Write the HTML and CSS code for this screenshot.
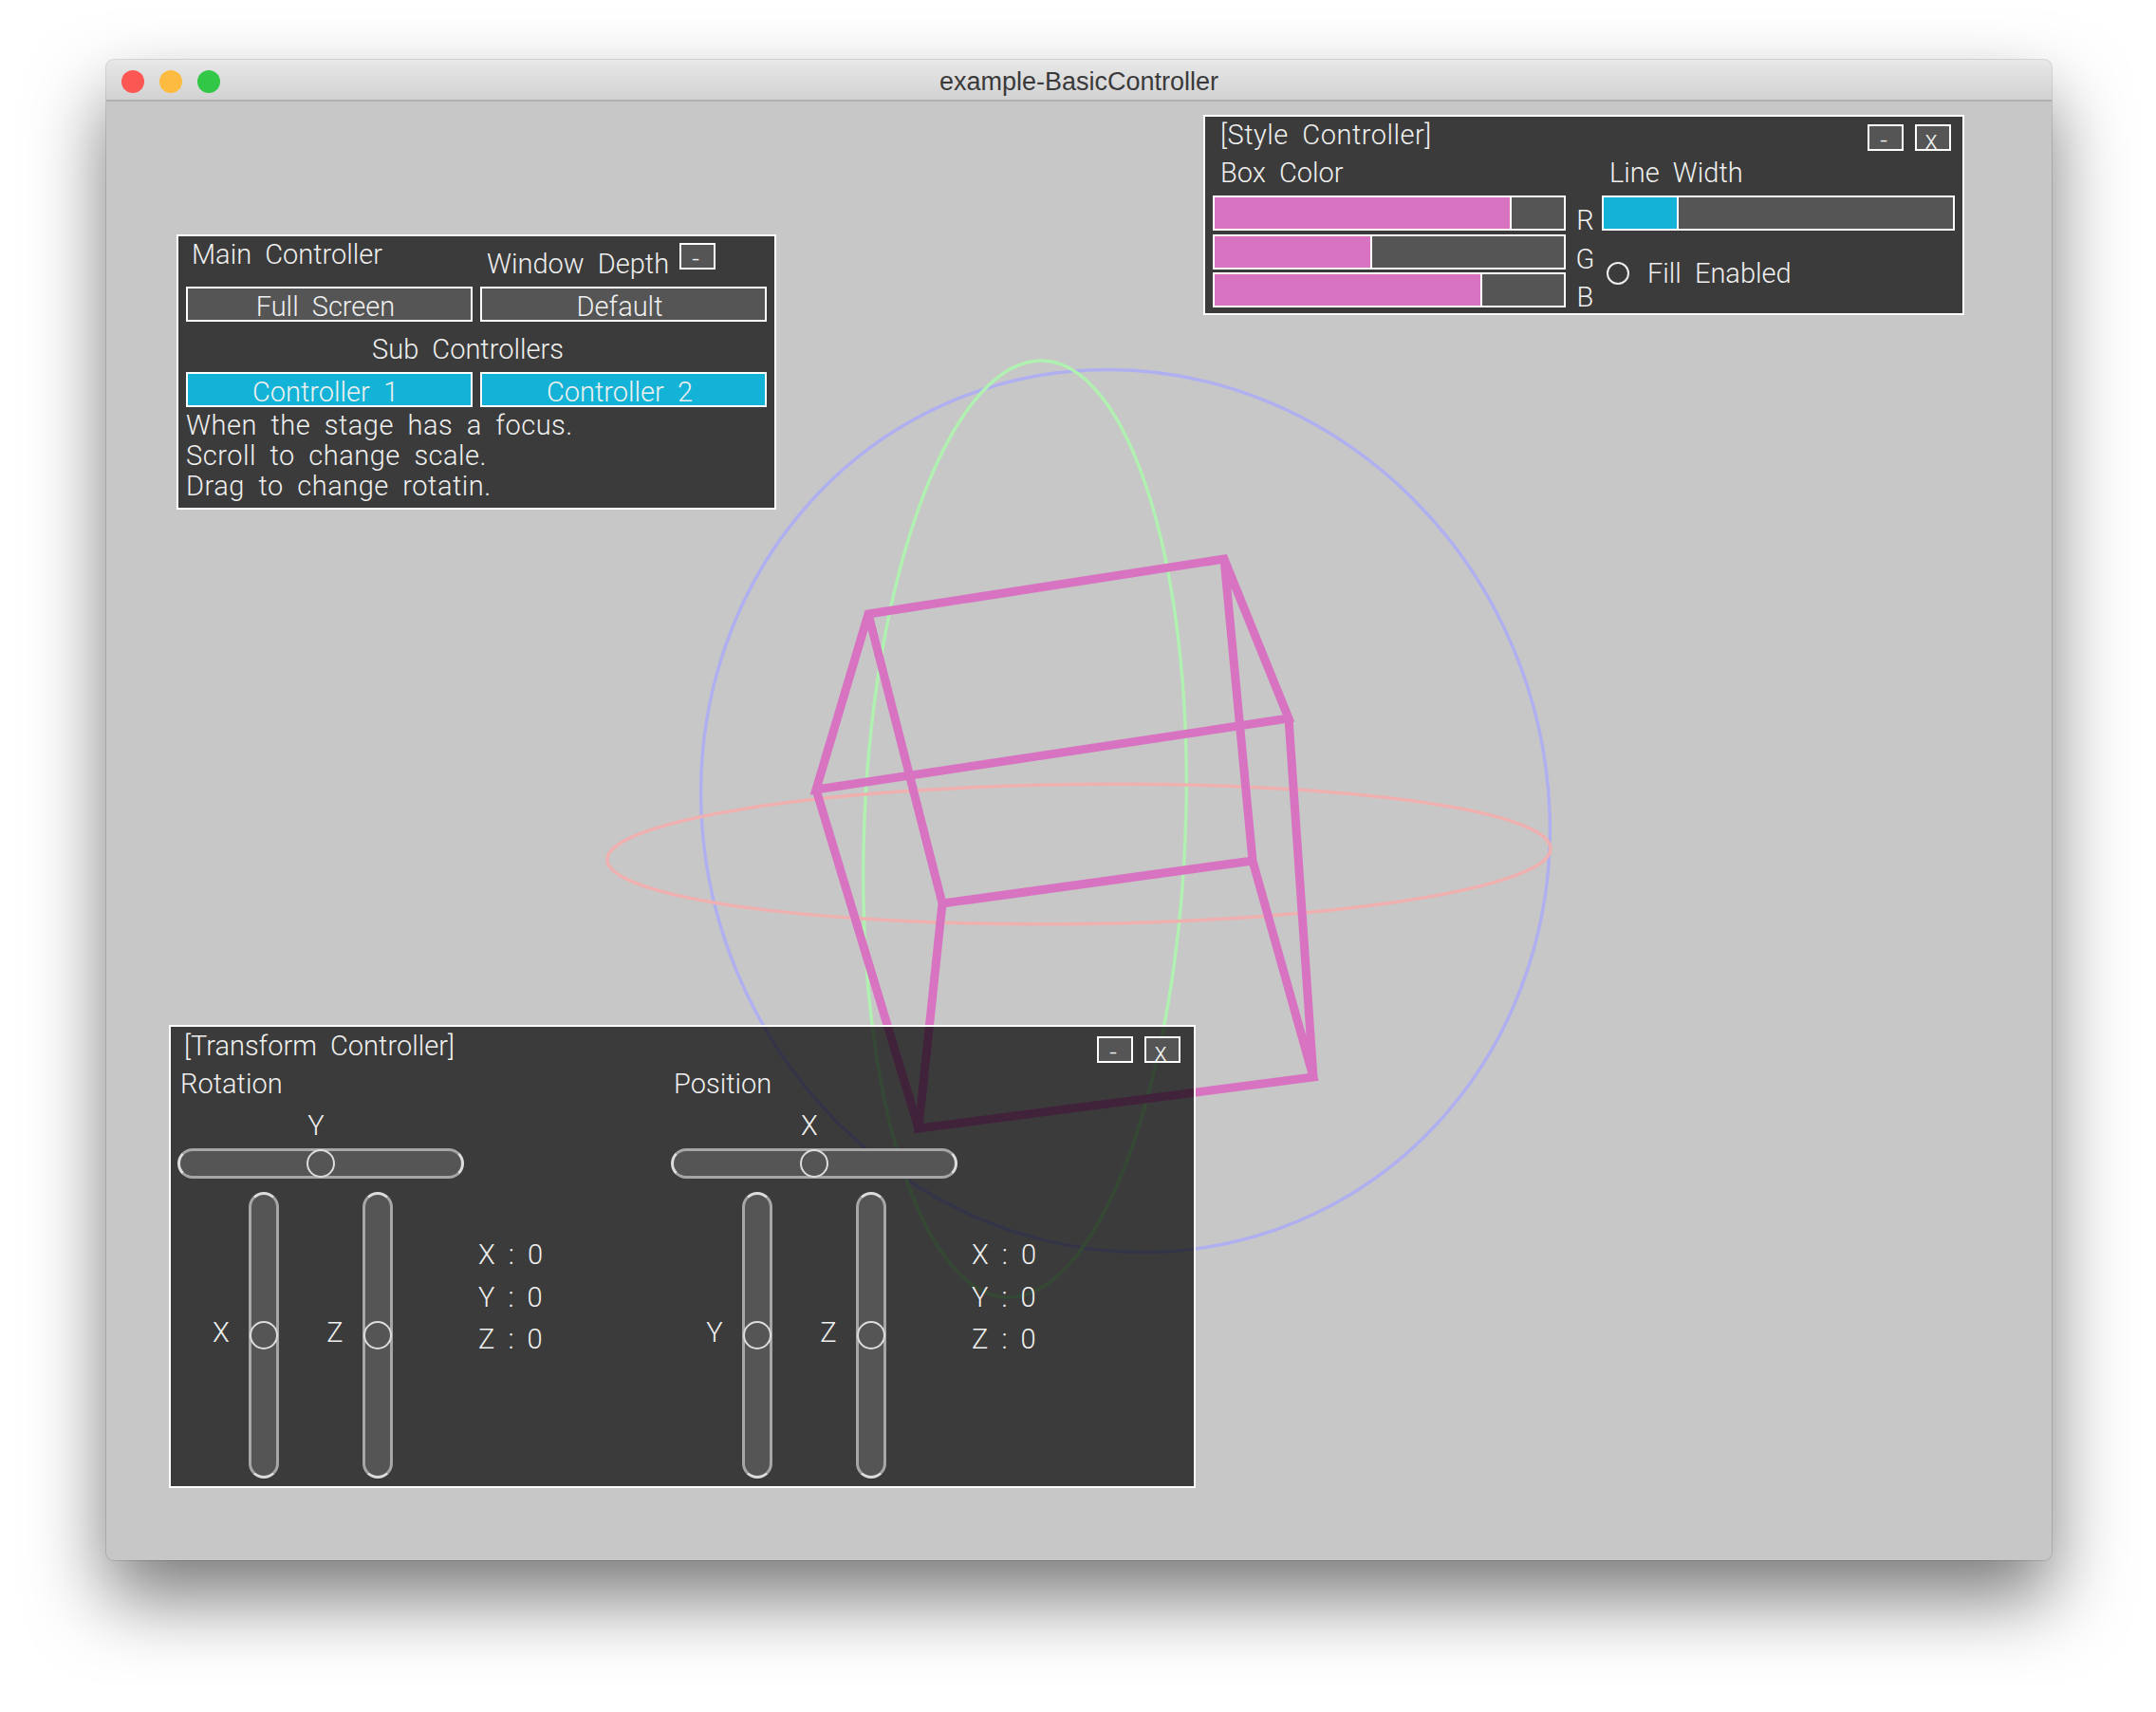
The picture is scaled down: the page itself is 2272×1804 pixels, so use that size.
FILE: index.html
```html
<!DOCTYPE html>
<html lang="en">
<head>
  <meta charset="UTF-8">
  <title>example-BasicController</title>
  <link rel="stylesheet" href="styles.css">
</head>
<body>
  <div class="window">
    <div class="titlebar">
      <div class="lights">
        <span class="light red"></span>
        <span class="light yellow"></span>
        <span class="light green"></span>
      </div>
      <div class="title">example-BasicController</div>
    </div>

    <div class="stage">
      <!-- viewBox uses page coordinates, the stage starts at 112,107 -->
      <svg class="scene" viewBox="112 107 2050 1537">
        <g class="orbits">
          <circle class="orbit blue" r="1" transform="matrix(447 0 18.5 465 1186 854.5)"/>
          <circle class="orbit green-ring" r="1" transform="matrix(170 -20 -10 493 1080 873.5)"/>
          <circle class="orbit red-ring" r="1" transform="matrix(497 -6.6 5.5 73.5 1137 900)"/>
        </g>
        <path class="box" d="M915 647L1290 589L1358 757L860 832Z M993 952L1320 907L1384 1135L968 1189Z M915 647L993 952 M1290 589L1320 907 M1358 757L1384 1135 M860 832L968 1189"/>
      </svg>

      <!-- main controller -->
      <div class="panel main-panel">
        <div class="main-head">
          <span class="main-title">Main Controller</span>
          <span class="depth-label">Window Depth</span>
          <button class="mini">-</button>
        </div>
        <div class="btn-row">
          <button class="btn">Full Screen</button>
          <button class="btn">Default</button>
        </div>
        <div class="sub-title">Sub Controllers</div>
        <div class="btn-row">
          <button class="btn on">Controller 1</button>
          <button class="btn on">Controller 2</button>
        </div>
        <div class="help">
          <div>When the stage has a focus.</div>
          <div>Scroll to change scale.</div>
          <div>Drag to change rotatin.</div>
        </div>
      </div>

      <!-- style controller -->
      <div class="panel style-panel">
        <div class="panel-head style-head">
          <span class="style-title">[Style Controller]</span>
          <div class="mini-group">
            <button class="mini">-</button>
            <button class="mini">x</button>
          </div>
        </div>
        <div class="style-body">
          <div>
            <div class="style-label">Box Color</div>
            <div class="bars">
              <div class="bar-row">
                <div class="bar"><div class="fill pink" style="width: 85%"></div></div>
                <span class="bar-label">R</span>
              </div>
              <div class="bar-row">
                <div class="bar"><div class="fill pink" style="width: 45%"></div></div>
                <span class="bar-label">G</span>
              </div>
              <div class="bar-row">
                <div class="bar"><div class="fill pink" style="width: 76.5%"></div></div>
                <span class="bar-label">B</span>
              </div>
            </div>
          </div>
          <div>
            <div class="style-label">Line Width</div>
            <div class="bars">
              <div class="bar wide"><div class="fill cyan" style="width: 21.5%"></div></div>
            </div>
            <div class="fill-row">
              <span class="radio"></span>
              <span>Fill Enabled</span>
            </div>
          </div>
        </div>
      </div>

      <!-- transform controller -->
      <div class="panel transform-panel">
        <div class="panel-head transform-head">
          <span>[Transform Controller]</span>
          <div class="mini-group">
            <button class="mini">-</button>
            <button class="mini">x</button>
          </div>
        </div>
        <div class="groups">
          <div class="group">
            <div class="group-title">Rotation</div>
            <div class="h-label">Y</div>
            <div class="slider h"><span class="thumb"></span></div>
            <div class="v-row">
              <div class="v-item">
                <span class="v-label">X</span>
                <div class="slider v"><span class="thumb"></span></div>
              </div>
              <div class="v-item">
                <span class="v-label">Z</span>
                <div class="slider v"><span class="thumb"></span></div>
              </div>
              <div class="values">
                <div>X : 0</div>
                <div>Y : 0</div>
                <div>Z : 0</div>
              </div>
            </div>
          </div>
          <div class="group">
            <div class="group-title">Position</div>
            <div class="h-label">X</div>
            <div class="slider h"><span class="thumb"></span></div>
            <div class="v-row">
              <div class="v-item">
                <span class="v-label">Y</span>
                <div class="slider v"><span class="thumb"></span></div>
              </div>
              <div class="v-item">
                <span class="v-label">Z</span>
                <div class="slider v"><span class="thumb"></span></div>
              </div>
              <div class="values">
                <div>X : 0</div>
                <div>Y : 0</div>
                <div>Z : 0</div>
              </div>
            </div>
          </div>
        </div>
      </div>
    </div>
  </div>
</body>
</html>
```

FILE: styles.css
```css
* {
  box-sizing: border-box;
}
html, body {
  margin: 0;
  height: 100%;
}
body {
  background: #fff;
  padding: 63px 0 0 112px;
  overflow: hidden;
}

/* window */
.window {
  width: 2050px;
  height: 1581px;
  border-radius: 8px;
  background: #c7c7c7;
  box-shadow: 0 40px 80px rgba(0, 0, 0, 0.52), 0 0 0 1px rgba(0, 0, 0, 0.12);
}
.titlebar {
  height: 44px;
  display: grid;
  grid-template-columns: 1fr auto 1fr;
  align-items: center;
  padding-top: 4px;
  background: linear-gradient(#e9e7e9, #d2d2d2);
  border-bottom: 2px solid #b1b1b1;
  border-radius: 8px 8px 0 0;
}
.lights {
  display: flex;
  gap: 16px;
  padding-left: 16px;
}
.light {
  width: 24px;
  height: 24px;
  border-radius: 50%;
}
.red { background: #fc5753; }
.yellow { background: #fdbc40; }
.green { background: #33c748; }
.title {
  font: 27px "Liberation Sans", Arial, sans-serif;
  color: #3a3a3a;
}

/* stage */
.stage {
  position: relative;
  height: 1537px;
  font: 300 29px/32px Roboto, "Liberation Sans", sans-serif;
  word-spacing: 7px;
  color: #f0f0f0;
}
.scene {
  position: absolute;
  left: 0;
  top: 0;
  width: 2050px;
  height: 1537px;
}
.orbit {
  fill: none;
  stroke-width: 3.5;
  vector-effect: non-scaling-stroke;
}
.blue { stroke: #b0b0f0; }
.green-ring { stroke: #b0f0b0; }
.red-ring { stroke: #f0b0b0; }
.box {
  fill: none;
  stroke: #d873c2;
  stroke-width: 9;
  stroke-linejoin: miter;
}

/* panels */
.panel {
  position: absolute;
  border: 2px solid #fff;
  background: rgba(0, 0, 0, 0.7);
}
.main-panel {
  left: 74px;
  top: 140px;
  width: 632px;
  height: 290px;
}
.style-panel {
  left: 1156px;
  top: 14px;
  width: 802px;
  height: 211px;
}
.transform-panel {
  left: 66px;
  top: 973px;
  width: 1082px;
  height: 488px;
}
button {
  font: inherit;
  word-spacing: inherit;
  color: inherit;
  margin: 0;
}
.mini {
  width: 38px;
  height: 28px;
  padding: 3px 4px 0 0;
  border: 2px solid #fff;
  background: #555;
  line-height: 24px;
  font-size: 27px;
}
.mini-group {
  display: flex;
  gap: 12px;
}

/* main controller */
.main-head {
  height: 53px;
  display: flex;
  padding: 3px 0 0 14px;
}
.main-title {
  width: 311px;
}
.depth-label {
  width: 203px;
  margin-top: 10px;
}
.main-head .mini {
  margin-top: 4px;
}
.btn-row {
  display: flex;
  gap: 8px;
  padding-left: 8px;
}
.btn {
  width: 302px;
  height: 37px;
  padding: 3px 8px 0 0;
  border: 2px solid #fff;
  background: #555;
  line-height: 32px;
  text-align: center;
}
.btn.on {
  background: #12b3d6;
}
.sub-title {
  height: 53px;
  padding: 13px 18px 0 0;
  text-align: center;
}
.help {
  padding: 3px 0 0 8px;
  letter-spacing: 0.5px;
}

/* style controller */
.panel-head {
  display: flex;
  justify-content: space-between;
}
.style-head {
  height: 43px;
  padding: 3px 12px 0 16px;
}
.style-title {
  letter-spacing: 0.5px;
}
.style-head .mini-group {
  margin-top: 5px;
}
.style-body {
  display: grid;
  grid-template-columns: 410px 372px;
  padding-left: 8px;
}
.style-label {
  height: 40px;
  padding-left: 8px;
}
.bars {
  display: flex;
  flex-direction: column;
  gap: 3.5px;
}
.bar-row {
  display: flex;
}
.bar {
  width: 372px;
  height: 37px;
  border: 2px solid #fff;
  background: #555;
}
.fill {
  height: 100%;
  border-right: 2px solid #fff;
}
.pink { background: #d873c2; }
.cyan { background: #12b3d6; }
.bar-label {
  flex: 1;
  height: 37px;
  padding: 10px 0 0 3px;
  text-align: center;
}
.fill-row {
  display: flex;
  align-items: center;
  gap: 19px;
  margin: 29px 0 0 5px;
}
.radio {
  width: 24px;
  height: 24px;
  border: 2px solid #eee;
  border-radius: 50%;
}

/* transform controller */
.transform-head {
  height: 44px;
  padding: 4px 14px 0 14px;
}
.transform-head .mini-group {
  margin-top: 6px;
}
.groups {
  display: flex;
}
.group {
  width: 520px;
}
.group-title {
  padding-left: 10px;
}
.h-label {
  width: 302px;
  margin: 12px 0 8px 7px;
  padding-right: 10px;
  text-align: center;
}
.slider {
  position: relative;
  border: 3px solid #a6a6a6;
  background: #555;
  border-radius: 16px;
}
.slider.h {
  width: 302px;
  height: 32px;
  margin-left: 7px;
  border-left-color: #ddd;
  border-right-color: #ddd;
}
.slider.v {
  width: 32px;
  height: 302px;
  border-top-color: #ddd;
  border-bottom-color: #ddd;
}
.thumb {
  position: absolute;
  left: 50%;
  top: 50%;
  width: 30px;
  height: 30px;
  transform: translate(-50%, -50%);
  border: 2px solid #ddd;
  border-radius: 50%;
}
.v-row {
  display: flex;
  margin-top: 14px;
  padding-left: 33px;
}
.v-item {
  display: flex;
  align-items: center;
  gap: 9px;
  margin-right: 39px;
}
.v-label {
  width: 40px;
  text-align: center;
  margin-bottom: 6px;
}
.values {
  margin: 44px 0 0 51px;
  line-height: 44.5px;
}
```
